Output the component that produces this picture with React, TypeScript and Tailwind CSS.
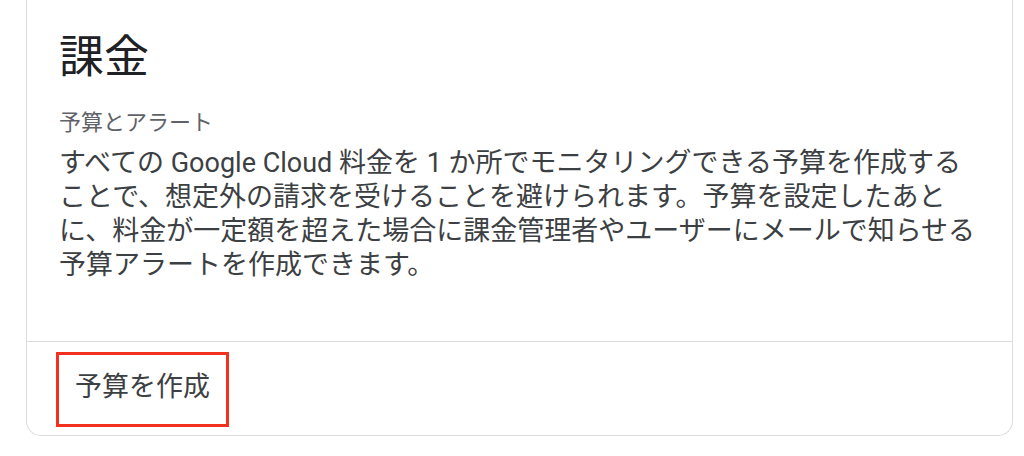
export default function App() {
  return (
    <div className="h-[456px] w-[1024px] overflow-hidden bg-white pl-[26px] pr-[11px] font-['Roboto','Noto_Sans_CJK_JP',sans-serif]">
      <div className="rounded-b-[15px] border border-t-0 border-[#dadce0] bg-white">
        {/* card body */}
        <div className="pl-[32px] pr-[16px] pt-[32px] pb-[59px]">
          <h2 className="text-[45px] leading-[52px] font-normal text-[#202124]">課金</h2>
          <p className="mt-[25px] text-[22px] leading-[28px] text-[#5f6368]">予算とアラート</p>
          <p className="mt-[9px] whitespace-nowrap text-[27px] leading-[34px] text-[#3c4043]">
            すべての Google Cloud 料金を 1 か所でモニタリングできる予算を作成する
            <br />
            ことで、想定外の請求を受けることを避けられます。予算を設定したあと
            <br />
            に、料金が一定額を超えた場合に課金管理者やユーザーにメールで知らせる
            <br />
            予算アラートを作成できます。
          </p>
        </div>

        <div className="border-t border-[#dadce0] px-[29px] pt-[10px] pb-[8px]">
          <button className="flex h-[75px] w-[173px] items-center justify-center border-[3px] border-[#f4311f] pb-[4px] text-[27px] text-[#3c4043]">
            予算を作成
          </button>
        </div>
      </div>
    </div>
  );
}
